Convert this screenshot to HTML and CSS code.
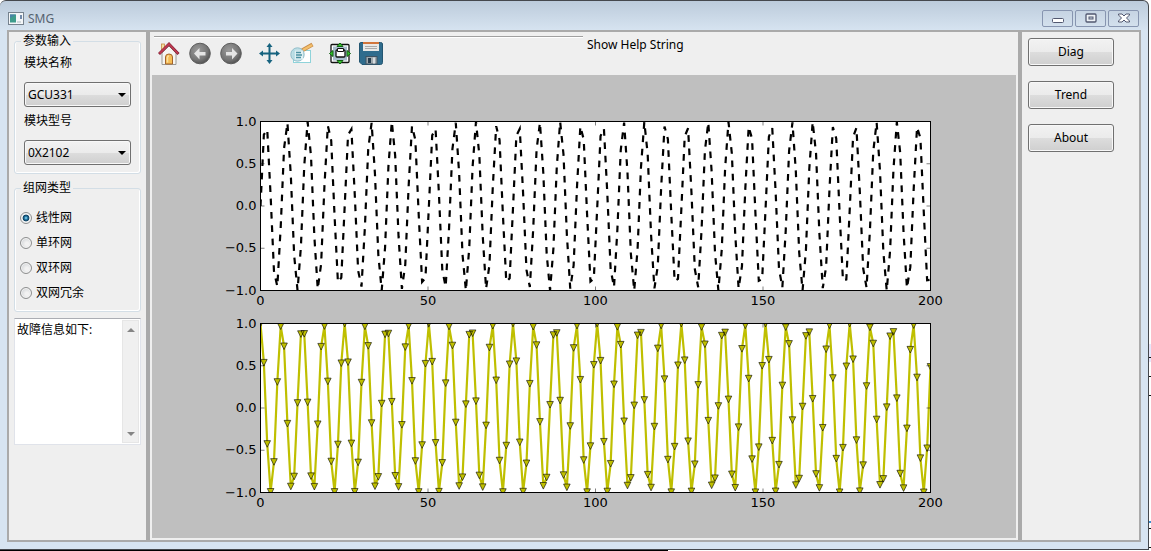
FILE: index.html
```
<!DOCTYPE html>
<html lang="zh-CN">
<head>
    <meta charset="UTF-8">
    <meta name="viewport" content="width=device-width, initial-scale=1.0">
    <title>SMG</title>
    <link rel="stylesheet" href="styles.css">
</head>
<body>
    <div class="window">
        <header class="title-bar">
            <svg class="app-icon" viewBox="0 0 16 14" width="16" height="14">
                <rect x="0.5" y="0.5" width="15" height="12" fill="#f4f6f8" stroke="#76828e"/>
                <rect x="2" y="2.5" width="6" height="8" fill="#3f9c8c"/>
                <path d="M2 10V6l6-3.500H2z" fill="#4a82a8"/>
                <path d="M13 3v4" stroke="#3b5d8a" stroke-width="1.400"/>
                <path d="M9 10h4" stroke="#c5ccd2" stroke-width="1.500"/>
            </svg>
            <span class="title">SMG</span>
            <div class="window-buttons">
                <button class="window-button" aria-label="最小化">
                    <svg viewBox="0 0 14 11" width="14" height="11"><rect x="1.500" y="5.500" width="11" height="4" rx="1" fill="#fff" stroke="#525870"/></svg>
                </button>
                <button class="window-button" aria-label="最大化">
                    <svg viewBox="0 0 14 11" width="14" height="11"><rect x="2" y="1" width="10" height="8" rx="1" fill="#eef2f6" stroke="#525870" stroke-width="1.300"/><rect x="5" y="4" width="4" height="2" fill="#c8d4e0" stroke="#525870"/></svg>
                </button>
                <button class="window-button" aria-label="关闭">
                    <svg viewBox="0 0 14 11" width="14" height="11"><path d="M1.500 1h3.500L7 3l2-2h3.500v1L9.500 5l3 3v1H9L7 7 5 9H1.500V8l3-3-3-3z" fill="#fff" stroke="#525870"/></svg>
                </button>
            </div>
        </header>

        <main class="panels">
            <aside class="side-panel">
                <fieldset class="group group-params">
                    <legend>参数输入</legend>
                    <label for="module-name">模块名称</label>
                    <div class="combo">
                        <select id="module-name"><option>GCU331</option></select>
                    </div>
                    <label for="module-type">模块型号</label>
                    <div class="combo">
                        <select id="module-type"><option>0X2102</option></select>
                    </div>
                </fieldset>
                <fieldset class="group group-network">
                    <legend>组网类型</legend>
                    <div class="radios">
                        <label class="radio"><input type="radio" name="network" checked>线性网</label>
                        <label class="radio"><input type="radio" name="network">单环网</label>
                        <label class="radio"><input type="radio" name="network">双环网</label>
                        <label class="radio"><input type="radio" name="network">双网冗余</label>
                    </div>
                </fieldset>
                <div class="log">
                    <textarea aria-label="故障信息">故障信息如下:</textarea>
                    <div class="scrollbar">
                        <button class="scroll-button" aria-label="向上"><svg viewBox="0 0 8 4" width="8" height="4"><path d="M0 4L4 0l4 4z" fill="#858585"/></svg></button>
                        <button class="scroll-button" aria-label="向下"><svg viewBox="0 0 8 4" width="8" height="4"><path d="M0 0l4 4 4-4z" fill="#858585"/></svg></button>
                    </div>
                </div>
            </aside>

            <section class="plot-panel">
                <div class="plot-header">
                    <div class="toolbar">
                        <button class="tool" aria-label="Home">
                            <svg viewBox="0 0 24 24" width="24" height="24">
                                <rect x="5.500" y="2" width="3" height="7" fill="#f5dfa0" stroke="#c58b45" stroke-width=".8"/>
                                <path d="M6 11l7-7 7 7v11.500H6z" fill="#f5f5f2" stroke="#9a9a96"/>
                                <path d="M9.500 22v-7q0-3 3.500-3t3.500 3v7z" fill="#f5bd55" stroke="#a4632a"/>
                                <path d="M11.500 20.500v-5q0-1.500 1.500-1.500" fill="none" stroke="#fbe0a0" stroke-width="1.500"/>
                                <path d="M3 12L13 2l9.500 10" fill="none" stroke="#7e1f33" stroke-width="2.800"/>
                                <path d="M3.500 11.500L13 2l9 9.500" fill="none" stroke="#c03a51" stroke-width="1.800"/>
                            </svg>
                        </button>
                        <button class="tool" aria-label="Back">
                            <svg viewBox="0 0 24 24" width="24" height="24">
                                <defs>
                                    <radialGradient id="ball" cx="0.4" cy="0.35" r="0.65">
                                        <stop offset="0" stop-color="#9b9b9b"/>
                                        <stop offset="0.7" stop-color="#767676"/>
                                        <stop offset="1" stop-color="#555"/>
                                    </radialGradient>
                                </defs>
                                <circle cx="12" cy="11.500" r="10.300" fill="url(#ball)" stroke="#5c5c5c"/>
                                <path d="M6 11.500l5.500-5.500v4h6v3.500h-6v4z" fill="#e4e4e4"/>
                            </svg>
                        </button>
                        <button class="tool" aria-label="Forward">
                            <svg viewBox="0 0 24 24" width="24" height="24">
                                <circle cx="11" cy="11.500" r="10.300" fill="url(#ball)" stroke="#5c5c5c"/>
                                <path d="M17.500 11.500L12 6v4H6v3.500h6v4z" fill="#e4e4e4"/>
                            </svg>
                        </button>
                        <button class="tool tool-first" aria-label="Pan">
                            <svg viewBox="0 0 24 24" width="24" height="24">
                                <path d="M11.500 4v15M4 11.500h15" stroke="#17637f" stroke-width="2"/>
                                <path d="M11.500 1l3 4h-6zM11.500 22l3-4h-6zM1 11.500l4-3v6zM22 11.500l-4-3v6z" fill="#17637f"/>
                            </svg>
                        </button>
                        <button class="tool" aria-label="Zoom">
                            <svg viewBox="0 0 24 24" width="24" height="24">
                                <rect x="3.500" y="8.500" width="17" height="12" fill="#fff" stroke="#8fd3da"/>
                                <path d="M12 8.500L22.500 2.500" stroke="#c98d4a" stroke-width="4"/>
                                <path d="M13 8L22 3" stroke="#f3bf6b" stroke-width="2.500"/>
                                <circle cx="7.500" cy="12.500" r="6.700" fill="#b8dce3" fill-opacity=".9" stroke="#92bfcb"/>
                                <rect x="5" y="8.500" width="8" height="9" fill="#dff0f3"/>
                                <path d="M6 10.500h5M6 13h6M6 15.500h5" stroke="#4b91a2" stroke-width="1.300"/>
                            </svg>
                        </button>
                        <button class="tool tool-first" aria-label="Subplots">
                            <svg viewBox="0 0 24 24" width="24" height="24">
                                <rect x="3" y="2.500" width="18" height="18" rx="1" fill="#fff" stroke="#111" stroke-width="1.300"/>
                                <rect x="5" y="4.500" width="14" height="14" fill="#a9bdcd"/>
                                <rect x="8" y="8" width="9" height="7" rx="1" fill="#fff" stroke="#111" stroke-width="1.300"/>
                                <path d="M9.500 6.500h6v3h-6z" fill="#fff" stroke="#111"/>
                                <path d="M12 1l3 3.500H9zM12 22l3-3.500H9zM1.500 11.500l3.500-3v6zM22.500 11.500l-3.500-3v6z" fill="#36c52d" stroke="#125d13"/>
                            </svg>
                        </button>
                        <button class="tool" aria-label="Save">
                            <svg viewBox="0 0 24 24" width="24" height="24">
                                <path d="M.5 .5h20q2 0 2 1.500v18.500q0 2-2 2H2L-.5 20V2Q-.5 .5 .5 .5z" fill="#2f6c8d" stroke="#245671"/>
                                <rect x="3" y="0" width="16" height="9" fill="#e9e9e7"/>
                                <rect x="3" y="0" width="16" height="2" fill="#d2763c"/>
                                <path d="M5 4.500h12M5 6.500h12" stroke="#aaa"/>
                                <rect x="6" y="14.500" width="11" height="7.500" fill="#9fa9ae" stroke="#3e5262"/>
                                <rect x="8" y="16" width="3" height="5" fill="#263d4e"/>
                                <path d="M14 15.500v6" stroke="#d7dcdf" stroke-width="2"/>
                            </svg>
                        </button>
                    </div>
                    <div class="help-text">Show Help String</div>
                </div>
                <svg class="figure" id="figure" viewBox="0 0 864 463"></svg>
            </section>

            <nav class="action-panel">
                <button class="push-button">Diag</button>
                <button class="push-button">Trend</button>
                <button class="push-button">About</button>
            </nav>
        </main>
    </div>

    <script src="plot.js"></script>
</body>
</html>
```

FILE: styles.css
```
* {
    box-sizing: border-box;
}
body {
    margin: 0;
    height: 100vh;
    padding: 0 2px 1px 0;
    background:
        linear-gradient(#111, #111) right 0 top 357px / 2px 1px no-repeat,
        linear-gradient(#111, #111) right 0 top 376px / 2px 1px no-repeat,
        linear-gradient(#111, #111) right 0 top 395px / 2px 1px no-repeat,
        linear-gradient(#3d8fd0, #3d8fd0) right 0 top 521px / 2px 2px no-repeat,
        linear-gradient(#111, #111) right 0 top 528px / 2px 1px no-repeat,
        linear-gradient(#111, #111) right 0 top 547px / 2px 1px no-repeat,
        linear-gradient(#e6e6fa, #e6e6fa) right 0 top 344px / 2px 18px no-repeat,
        linear-gradient(90deg, #000 58%, #fff 58%) left bottom / 100% 1px no-repeat,
        #fff;
    font-family: "Noto Sans", "Noto Sans CJK SC", sans-serif;
    font-size: 12px;
    line-height: 16px;
    color: #000;
}
button, select, textarea {
    font: inherit;
    color: inherit;
    margin: 0;
}
.window {
    height: 100%;
    display: flex;
    flex-direction: column;
    padding: 0 7px 7px;
    background: linear-gradient(#bccbdb, #d7e4f1 30px);
    border: solid #45484d;
    border-width: 1px 1px 1px 0;
    border-radius: 6px 6px 0 0;
}
.title-bar {
    flex: none;
    height: 29px;
    display: flex;
    align-items: center;
    gap: 4px;
    padding: 6px 2px 0;
}
.app-icon {
    margin-left: -1px;
}
.title {
    color: #566270;
}
.window-buttons {
    display: flex;
    gap: 2px;
    margin-left: auto;
}
.window-button {
    width: 31px;
    height: 17px;
    padding: 0;
    display: flex;
    justify-content: center;
    align-items: center;
    background: linear-gradient(#c6d4e3, #d3e0ed);
    border: 1px solid #8795b0;
    border-radius: 2px;
}
.panels {
    flex: 1;
    min-height: 0;
    display: flex;
    gap: 4px;
    background-color: #aaa;
    border: 2px solid #aaa;
}
.side-panel {
    flex: none;
    width: 137px;
    display: flex;
    flex-direction: column;
    gap: 6px;
    padding: 1px 5px;
    background-color: #efefef;
}
.group {
    min-width: 0;
    margin: 0;
    padding: 6px 9px 8px;
    border: 1px solid #d3dee6;
    border-radius: 3px;
    box-shadow: inset 1px 0 #fff, inset -1px -1px #fff;
}
.group legend {
    margin-left: -3px;
    padding: 0 2px;
}
.group > label {
    display: block;
}
.combo {
    position: relative;
    margin: 11px 0 6px;
}
.combo:last-child {
    margin-bottom: 0;
}
.combo select {
    display: block;
    width: 100%;
    height: 25px;
    padding: 0 3px;
    appearance: none;
    background: linear-gradient(#f2f2f2, #ebebeb 50%, #ddd 50%, #cfcfcf);
    border: 1px solid #707070;
    border-radius: 3px;
    box-shadow: inset 0 0 0 1px #f8f8f8;
}
.combo::after {
    content: "";
    position: absolute;
    right: 5px;
    top: 11px;
    border: 4px solid transparent;
    border-top-color: #000;
    border-bottom: 0;
}
.group-network {
    padding: 14px 5px 10px;
}
.group-network legend {
    margin-left: 1px;
}
.radios {
    display: flex;
    flex-direction: column;
    gap: 9px;
}
.radio {
    display: flex;
    align-items: center;
    gap: 4px;
}
.radio input {
    appearance: none;
    width: 12px;
    height: 12px;
    margin: 0;
    border: 1px solid #8e8f8f;
    border-radius: 50%;
    background: radial-gradient(circle at 60% 60%, #f2f2f2 20%, #c5c9cd);
    box-shadow: inset 0 0 0 1px #f4f4f4;
}
.radio input:checked {
    background: radial-gradient(circle, #7fd0ee 5%, #1b6c99 25%, #103a56 45%, #eef2f4 52%);
}
.log {
    height: 127px;
    display: flex;
    background-color: #fff;
    border: 1px solid #e0e3ea;
    border-top-color: #abadb3;
    padding: 1px;
}
.log textarea {
    flex: 1;
    min-width: 0;
    padding: 2px 1px;
    border: 0;
    outline: 0;
    resize: none;
    overflow: hidden;
    background-color: transparent;
}
.scrollbar {
    width: 17px;
    display: flex;
    flex-direction: column;
    justify-content: space-between;
    background-color: #f0f0f0;
    border: 1px solid #e6e6e6;
}
.scroll-button {
    height: 17px;
    padding: 0;
    display: flex;
    justify-content: center;
    align-items: center;
    background: none;
    border: 0;
}
.plot-panel {
    flex: 1;
    min-width: 0;
    display: flex;
    flex-direction: column;
    padding: 0 2px 2px;
    background-color: #efefef;
}
.plot-header {
    flex: none;
    height: 43px;
    display: flex;
    gap: 4px;
    padding: 4px 4px 0 2px;
}
.toolbar {
    flex: 1;
    display: flex;
    align-items: flex-start;
    gap: 8px;
    padding: 3px 2px 0;
    border-top: 1px solid #a0a0a0;
    box-shadow: inset 0 1px #fff;
}
.tool {
    width: 24px;
    height: 24px;
    margin-top: 2px;
    padding: 0;
    background: none;
    border: 0;
}
.tool svg {
    display: block;
    overflow: visible;
}
.tool-first {
    margin-left: 6px;
}
.help-text {
    flex: 1;
    padding-top: 1px;
}
.figure {
    flex: 1;
    min-height: 0;
    width: 100%;
    background-color: #bfbfbf;
    font-family: "DejaVu Sans", sans-serif;
    font-size: 13px;
}
.axes-bg {
    fill: #fff;
}
.axes-frame {
    fill: none;
    stroke: #000;
}
.tick {
    stroke: #000;
    stroke-width: 0.5px;
}
.line-sin {
    fill: none;
    stroke: #000;
    stroke-width: 2.2px;
    stroke-dasharray: 6.67 6.67;
}
.line-cos {
    fill: none;
    stroke: #bfbf00;
    stroke-width: 2.2px;
    stroke-linejoin: round;
}
.marker {
    fill: #bfbf00;
    stroke: #000;
    stroke-width: 0.6px;
}
.label-x {
    text-anchor: middle;
}
.label-y {
    text-anchor: end;
}
.action-panel {
    flex: none;
    width: 117px;
    display: flex;
    flex-direction: column;
    gap: 15px;
    padding: 6px;
    background-color: #efefef;
}
.push-button {
    width: 86px;
    height: 28px;
    padding: 0;
    background: linear-gradient(#f2f2f2, #ebebeb 50%, #ddd 50%, #cfcfcf);
    border: 1px solid #707070;
    border-radius: 3px;
    box-shadow: inset 0 0 0 1px #f8f8f8;
}
```

FILE: plot.js
```
const SVG_NS = 'http://www.w3.org/2000/svg';
const figure = document.getElementById('figure');
const LEFT = 108.5;
const WIDTH = 670;
const HEIGHT = 169;
const SAMPLES = 200;

function add(parent, name, attrs, text) {
    const el = document.createElementNS(SVG_NS, name);
    for (const key in attrs) {
        el.setAttribute(key, attrs[key]);
    }
    if (text !== undefined) {
        el.textContent = text;
    }
    parent.appendChild(el);
    return el;
}

function drawAxes(top, id, fn, lineClass, withMarkers) {
    const px = x => LEFT + x / 200 * WIDTH;
    const py = y => top + (1 - y) / 2 * HEIGHT;
    const box = { x: LEFT, y: top, width: WIDTH, height: HEIGHT };

    add(figure, 'rect', { ...box, class: 'axes-bg' });
    add(add(figure, 'clipPath', { id: id }), 'rect', box);

    const group = add(figure, 'g', { 'clip-path': `url(#${id})` });
    const points = [];
    for (let i = 0; i < SAMPLES; i++) {
        // evenly spaced, both ends included
        const x = i * 200 / (SAMPLES - 1);
        points.push([px(x), py(fn(x))]);
    }
    add(group, 'path', { d: 'M' + points.map(p => p.join(' ')).join('L'), class: lineClass });
    if (withMarkers) {
        const d = points.map(([x, y]) => `M${x - 3.3} ${y - 3.3}h6.6l-3.3 6.6z`).join('');
        add(group, 'path', { d: d, class: 'marker' });
    }

    add(figure, 'rect', { ...box, class: 'axes-frame' });

    [0, 50, 100, 150, 200].forEach(v => {
        const x = px(v);
        add(figure, 'path', { d: `M${x} ${top}v4M${x} ${top + HEIGHT}v-4`, class: 'tick' });
        add(figure, 'text', { x: x, y: top + HEIGHT + 14, class: 'label-x' }, v);
    });
    [1, 0.5, 0, -0.5, -1].forEach(v => {
        const y = py(v);
        add(figure, 'path', { d: `M${LEFT} ${y}h4M${LEFT + WIDTH} ${y}h-4`, class: 'tick' });
        add(figure, 'text', { x: LEFT - 4, y: y + 4, class: 'label-y' }, v.toFixed(1).replace('-', '\u2212'));
    });
}

drawAxes(46.5, 'clip-sin', Math.sin, 'line-sin', false);
drawAxes(248.5, 'clip-cos', Math.cos, 'line-cos', true);
```
